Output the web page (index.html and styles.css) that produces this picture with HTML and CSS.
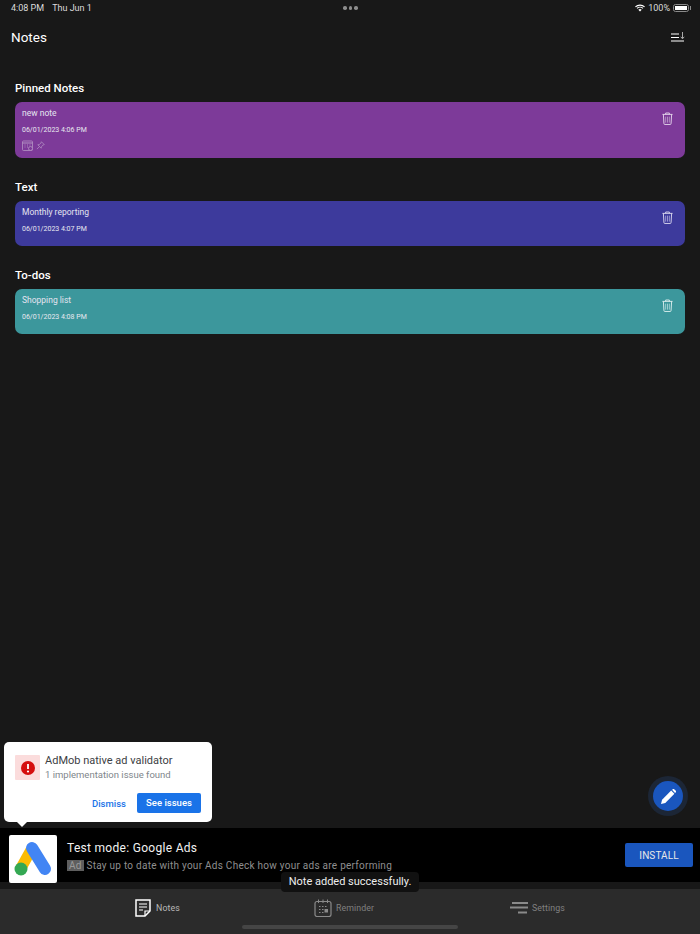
FILE: index.html
```html
<!DOCTYPE html>
<html lang="en">
<head>
  <meta charset="UTF-8" />
  <meta name="viewport" content="width=device-width, initial-scale=1.0"/>
  <title>Notes</title>
  <link rel="stylesheet" href="styles.css">
</head>
<body>
  <div class="app">
    <div class="status">
      <div class="status-left"><span>4:08 PM</span><span>Thu Jun 1</span></div>
      <div class="status-dots"><i></i><i></i><i></i></div>
      <div class="status-right">
        <svg width="10" height="8" viewBox="0 0 12 9"><path d="M.5 3.200a8 8 0 0 1 11 0M2.400 5a5.200 5.200 0 0 1 7.200 0" fill="none" stroke="#fff" stroke-width="1.300"/><path d="M4 6.500a3 3 0 0 1 4 0L6 8.800z" fill="#fff"/></svg>
        <span>100%</span>
        <div class="battery"><div class="battery-fill"></div></div>
      </div>
    </div>

    <header class="topbar">
      <h1>Notes</h1>
      <svg width="14" height="10" viewBox="0 0 14 10"><path d="M0 2h8M0 5.500h8M0 9h13" stroke="#fff" stroke-width="1.100" fill="none"/><path d="M11.500 0v6.500M9.800 4.800l1.700 2 1.700-2" stroke="#aaa" stroke-width="1" fill="none"/></svg>
    </header>

    <main class="content">
      <section class="group">
        <h2>Pinned Notes</h2>
        <div class="note note-purple note-tall">
          <div class="note-body">
            <div class="note-title">new note</div>
            <div class="note-date">06/01/2023 4:06 PM</div>
            <div class="note-icons">
              <svg width="11" height="11" viewBox="0 0 11 11"><rect x=".5" y="1" width="10" height="9.500" rx="1" fill="none" stroke="#b594c4" stroke-width=".8"/><path d="M.5 3h10" stroke="#b594c4"/><path d="M2.500 5h1M5 5h1M7.500 5h1M2.500 7h1M5 7h1" stroke="#b594c4" stroke-width=".9"/><circle cx="8.500" cy="8.500" r="2" fill="#7d3a99" stroke="#b594c4" stroke-width=".8"/></svg>
              <svg width="9" height="9" viewBox="0 0 10 10"><path d="M6 .8 9.200 4 7.500 4.600 6 6.500 5.800 8 2 4.200 3.500 4 5.400 2.500zM3.700 6.300 1 9" fill="none" stroke="#b594c4" stroke-width=".8"/></svg>
            </div>
          </div>
          <svg class="trash" width="11" height="13" viewBox="0 0 12 14"><path d="M.5 2.500h11M4 2.500V1h4v1.500M1.500 2.500l.6 10a1 1 0 0 0 1 1h5.800a1 1 0 0 0 1-1l.6-10" fill="none" stroke="#e6d8ec" stroke-width="1"/><path d="M4 5v6.500M6 5v6.500M8 5v6.500" stroke="#b594c4" stroke-width="1"/></svg>
        </div>
      </section>

      <section class="group">
        <h2>Text</h2>
        <div class="note note-indigo">
          <div class="note-body">
            <div class="note-title">Monthly reporting</div>
            <div class="note-date">06/01/2023 4:07 PM</div>
          </div>
          <svg class="trash" width="11" height="13" viewBox="0 0 12 14"><path d="M.5 2.500h11M4 2.500V1h4v1.500M1.500 2.500l.6 10a1 1 0 0 0 1 1h5.800a1 1 0 0 0 1-1l.6-10" fill="none" stroke="#dcdaf0" stroke-width="1"/><path d="M4 5v6.500M6 5v6.500M8 5v6.500" stroke="#a09dd4" stroke-width="1"/></svg>
        </div>
      </section>

      <section class="group">
        <h2>To-dos</h2>
        <div class="note note-teal">
          <div class="note-body">
            <div class="note-title">Shopping list</div>
            <div class="note-date">06/01/2023 4:08 PM</div>
          </div>
          <svg class="trash" width="11" height="13" viewBox="0 0 12 14"><path d="M.5 2.500h11M4 2.500V1h4v1.500M1.500 2.500l.6 10a1 1 0 0 0 1 1h5.800a1 1 0 0 0 1-1l.6-10" fill="none" stroke="#dff0f0" stroke-width="1"/><path d="M4 5v6.500M6 5v6.500M8 5v6.500" stroke="#a5d3d5" stroke-width="1"/></svg>
        </div>
      </section>
    </main>

    <div class="ad">
      <div class="ad-logo">
        <svg width="48" height="48" viewBox="0 0 48 48"><path d="M22 15 12 33" stroke="#fbbc04" stroke-width="11" fill="none"/><path d="M23 13 36 34" stroke="#4285f4" stroke-width="12" stroke-linecap="round" fill="none"/><circle cx="12" cy="34" r="6.500" fill="#34a853"/></svg>
      </div>
      <div class="ad-text">
        <div class="ad-title">Test mode: Google Ads</div>
        <div class="ad-sub"><span class="ad-tag">Ad</span> Stay up to date with your Ads Check how your ads are performing</div>
      </div>
      <button class="install">INSTALL</button>
    </div>

    <nav class="tabs">
      <div class="tab tab-active">
        <svg width="18" height="18" viewBox="0 0 18 18"><path d="M2 1h14v11l-5 5H2z" fill="none" stroke="#fff" stroke-width="1.500"/><path d="M5 5h8M5 8h8M5 11h4" stroke="#fff" stroke-width="1.200"/><path d="M11 17v-5h5" fill="none" stroke="#fff" stroke-width="1.200"/></svg>
        <span>Notes</span>
      </div>
      <div class="tab">
        <svg width="18" height="18" viewBox="0 0 18 18"><rect x="1" y="2.500" width="16" height="15" rx="2" fill="none" stroke="#8a8a8a" stroke-width="1.200"/><path d="M4.500 0.500v3.500M9 0.500v3.500M13.500 0.500v3.500" stroke="#8a8a8a"/><path d="M5 7.500h1.500M8 7.500h1.500M11 7.500h1.500M5 10.500h1.500M8 10.500h1.500M5 13.500h1.500M8 13.500h1.500" stroke="#8a8a8a" stroke-width="1.200"/><rect x="10.500" y="10" width="3.500" height="3.500" fill="#8a8a8a"/></svg>
        <span>Reminder</span>
      </div>
      <div class="tab">
        <svg width="18" height="12" viewBox="0 0 18 12"><path d="M2 1h16M0 5.500h18M8 10.500h9" stroke="#8a8a8a" stroke-width="1.800"/></svg>
        <span>Settings</span>
      </div>
    </nav>
  </div>

  <div class="validator">
    <div class="validator-top">
      <div class="validator-icon"><svg width="14" height="14" viewBox="0 0 14 14"><circle cx="7" cy="7" r="7" fill="#d50f0f"/><path d="M7 3v5" stroke="#fff" stroke-width="1.800"/><circle cx="7" cy="10.500" r="1.100" fill="#fff"/></svg></div>
      <div>
        <div class="validator-title">AdMob native ad validator</div>
        <div class="validator-sub">1 implementation issue found</div>
      </div>
    </div>
    <div class="validator-actions">
      <span class="dismiss">Dismiss</span>
      <span class="see-issues">See issues</span>
    </div>
  </div>

  <div class="fab">
    <svg width="15" height="15" viewBox="0 0 14 14"><path d="M0 14 1 10 9.500 1.500 12.500 4.500 4 13z" fill="#fff"/><path d="M10.300 .8 11 .2a1 1 0 0 1 1.300 0l1.500 1.500a1 1 0 0 1 0 1.300l-.7.700z" fill="#fff"/></svg>
  </div>

  <div class="toast">Note added successfully.</div>
  <div class="home-bar"></div>
</body>
</html>
```

FILE: styles.css
```css
* {
  box-sizing: border-box;
}
body {
  font-family: 'Roboto', 'Liberation Sans', sans-serif;
  margin: 0;
  padding: 0;
  background: #181818;
  color: white;
  width: 700px;
  height: 934px;
  overflow: hidden;
  position: relative;
}
.app {
  display: flex;
  flex-direction: column;
  height: 934px;
}
.status {
  height: 16px;
  padding: 0 11px;
  display: flex;
  justify-content: space-between;
  align-items: center;
  font-size: 9px;
  color: #dcdcdc;
  position: relative;
}
.status-left {
  display: flex;
  gap: 8px;
}
.status-dots {
  display: flex;
  gap: 2px;
  position: absolute;
  left: 343px;
  top: 6px;
}
.status-dots i {
  width: 3.5px;
  height: 3.5px;
  border-radius: 50%;
  background: #8c8c8c;
}
.status-right {
  display: flex;
  align-items: center;
  gap: 3px;
}
.battery {
  width: 16px;
  height: 8px;
  border: 1px solid #8a8a8a;
  border-radius: 2.5px;
  padding: 1px;
  position: relative;
}
.battery::after {
  content: "";
  position: absolute;
  right: -3px;
  top: 1px;
  width: 1.5px;
  height: 4px;
  background: #8a8a8a;
}
.battery-fill {
  height: 100%;
  background: #fff;
}
.topbar {
  height: 42px;
  padding: 0 15px 0 11px;
  display: flex;
  justify-content: space-between;
  align-items: center;
}
.topbar h1 {
  margin: 0;
  font-size: 13.5px;
  font-weight: 400;
}
.content {
  flex: 1;
  padding: 23px 15px 0;
}
.group {
  margin-bottom: 22px;
}
.group h2 {
  margin: 0 0 6px;
  font-size: 11.5px;
  line-height: 15px;
  font-weight: 500;
}
.note {
  height: 45px;
  border-radius: 7px;
  padding: 5px 7px;
  display: flex;
  justify-content: space-between;
}
.note-tall {
  height: 56px;
}
.note-purple {
  background: #7d3a99;
}
.note-indigo {
  background: #3d3a9c;
}
.note-teal {
  background: #3c979c;
}
.note-title {
  font-size: 8.5px;
  line-height: 12px;
  color: #e4e4f0;
}
.note-date {
  font-size: 7px;
  line-height: 10px;
  margin-top: 6px;
  color: #e8e8f0;
}
.note-icons {
  display: flex;
  align-items: center;
  gap: 3px;
  margin-top: 5px;
}
.trash {
  margin: 5px 5px 0 0;
}
.ad {
  height: 54px;
  background: #000;
  display: flex;
  align-items: center;
  padding: 0 7px 0 9px;
  margin-bottom: 7px;
}
.ad-logo {
  width: 48px;
  height: 48px;
  background: #fff;
  border-radius: 2px;
  align-self: flex-start;
  margin: 7px 10px 0 0;
  position: relative;
}
.ad-text {
  flex: 1;
  align-self: flex-start;
  padding-top: 12px;
}
.ad-title {
  font-size: 12px;
  line-height: 16px;
  color: #f2f2f2;
  letter-spacing: 0.3px;
}
.ad-sub {
  font-size: 10px;
  line-height: 13px;
  margin-top: 3px;
  color: #8f8f8f;
  letter-spacing: 0.26px;
}
.ad-tag {
  background: #5e5e5e;
  color: #9a9a9a;
  padding: 0 2px;
}
.install {
  width: 68px;
  height: 24px;
  background: #1a56be;
  color: #e8e8e8;
  border: none;
  border-radius: 2px;
  font-family: inherit;
  font-size: 10px;
  font-weight: 400;
  letter-spacing: 0.1px;
  padding: 0;
}
.tabs {
  height: 45px;
  background: #2b2b2b;
  display: grid;
  grid-template-columns: 180px 196px auto;
  padding: 0 0 8px 134px;
}
.tab {
  display: flex;
  align-items: center;
  gap: 4px;
  font-size: 8.8px;
  letter-spacing: 0.1px;
  color: #808080;
}
.tab-active {
  color: #b8b8b8;
}
.validator {
  position: absolute;
  left: 4px;
  top: 742px;
  width: 208px;
  height: 80px;
  background: #fff;
  border-radius: 5px;
  padding: 13px 11px 0;
}
.validator::after {
  content: "";
  position: absolute;
  left: 13px;
  bottom: -5px;
  border-left: 5px solid transparent;
  border-right: 5px solid transparent;
  border-top: 5px solid #fff;
}
.validator-top {
  display: flex;
  gap: 5px;
}
.validator-icon {
  width: 25px;
  height: 25px;
  background: #fbdcdc;
  border-radius: 1px;
  display: flex;
  align-items: center;
  justify-content: center;
}
.validator-title {
  font-size: 11px;
  line-height: 12px;
  color: #3c4043;
}
.validator-sub {
  font-size: 9.5px;
  line-height: 12px;
  margin-top: 2px;
  color: #80868b;
}
.validator-actions {
  display: flex;
  justify-content: flex-end;
  align-items: center;
  gap: 11px;
  margin-top: 12px;
  font-size: 9.5px;
  font-weight: 500;
}
.dismiss {
  color: #1a73e8;
}
.see-issues {
  width: 64px;
  height: 20px;
  line-height: 20px;
  text-align: center;
  background: #1a73e8;
  color: #fff;
  border-radius: 2px;
}
.fab {
  position: absolute;
  left: 653px;
  top: 781px;
  width: 30px;
  height: 30px;
  border-radius: 50%;
  background: #1a56be;
  box-shadow: 0 0 0 5px #1c2636;
  display: flex;
  align-items: center;
  justify-content: center;
}
.toast {
  position: absolute;
  left: 281px;
  top: 872px;
  width: 138px;
  height: 20px;
  line-height: 20px;
  background: #111;
  border-radius: 4px;
  font-size: 11px;
  text-align: center;
  color: #eee;
}
.home-bar {
  position: absolute;
  left: 242px;
  top: 925px;
  width: 216px;
  height: 4px;
  border-radius: 2px;
  background: #454545;
}
```
